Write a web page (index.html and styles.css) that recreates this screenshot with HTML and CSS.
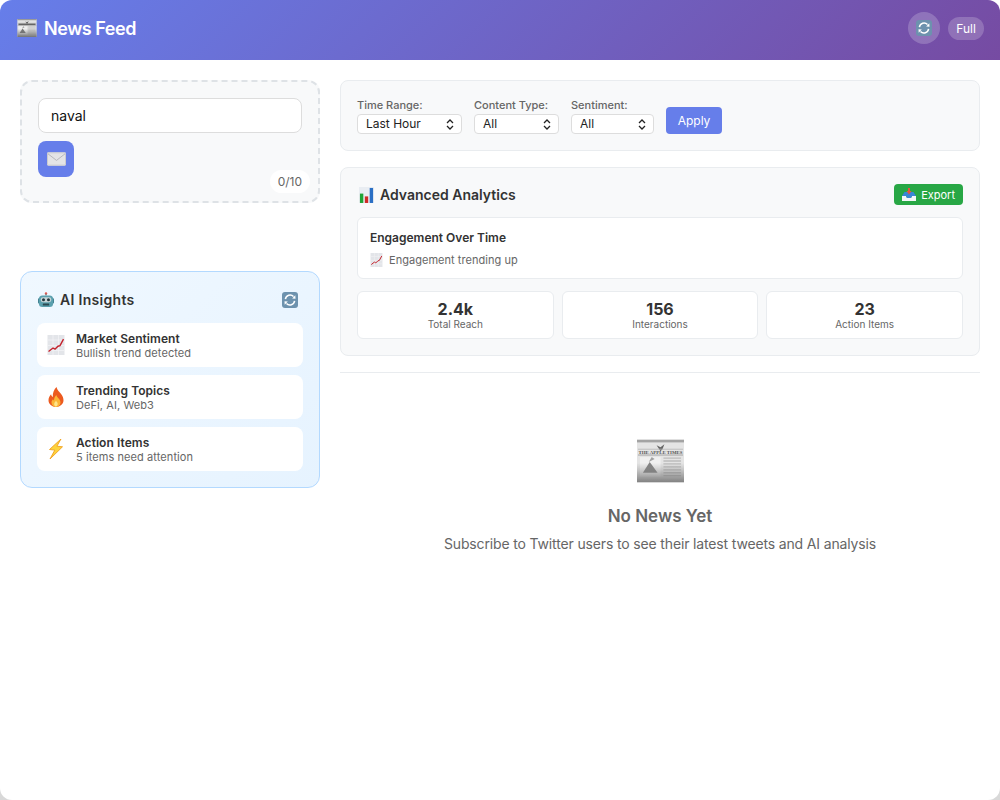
FILE: index.html
```html
<!DOCTYPE html>
<html lang="en">
<head>
    <meta charset="UTF-8">
    <meta name="viewport" content="width=device-width, initial-scale=1.0">
    <title>News Feed</title>
    <link rel="stylesheet" href="styles.css">
</head>
<body>
    <svg class="defs" width="0" height="0">
        <defs>
            <linearGradient id="news-fade" x1="0" y1="0" x2="0" y2="1">
                <stop offset="0" stop-color="#777" stop-opacity="0"/>
                <stop offset="1" stop-color="#666" stop-opacity=".9"/>
            </linearGradient>
        </defs>
        <symbol id="i-news" viewBox="0 0 48 44">
            <rect x="0" y="0" width="48" height="44" fill="#e2e2e2"/>
            <rect x="0" y="0" width="48" height="3" fill="#9a9a9a"/>
            <path d="M20 6l4 2 4-3-2 5-2 2-2-3z" fill="#555"/>
            <rect x="1" y="9.500" width="46" height=".8" fill="#aaa"/>
            <rect x="1" y="15.500" width="46" height=".8" fill="#888"/>
            <rect x="3" y="18" width="21" height="20" fill="#efefef"/>
            <path d="M6 34l7-11 3 4 5 7z" fill="#777"/>
            <path d="M12 23l3-5 3 2z" fill="#999"/>
            <path d="M27 19h18M27 22h18M27 25h18M27 28h18M27 31h18M27 34h18M27 37h18" stroke="#b5b5b5" stroke-width="1.300"/>
            <rect x="0" y="24" width="48" height="20" fill="url(#news-fade)"/>
        </symbol>
        <symbol id="i-mail" viewBox="0 0 20 14">
            <rect x="0" y="0" width="20" height="14" rx="1.500" fill="#e4e4e6"/>
            <rect x=".5" y=".5" width="19" height="13" rx="1" fill="none" stroke="#c9c9cd"/>
            <path d="M1 1.500l9 7 9-7" fill="none" stroke="#b5b5ba"/>
        </symbol>
        <symbol id="i-sync" viewBox="0 0 16 16">
            <rect width="16" height="16" rx="3" fill="#6d92ae"/>
            <path d="M3.400 7.200A4.700 4.700 0 0 1 11.500 4.600" fill="none" stroke="#fff" stroke-width="1.500"/>
            <path d="M12.600 8.800A4.700 4.700 0 0 1 4.500 11.400" fill="none" stroke="#fff" stroke-width="1.500"/>
            <path d="M10.200 6.600l3.300.2-.2-3.600zM5.800 9.400l-3.300-.2.2 3.600z" fill="#fff"/>
        </symbol>
        <symbol id="i-robot" viewBox="0 0 18 18">
            <circle cx="9" cy="1.600" r="1.400" fill="#e0574f"/>
            <rect x="8.400" y="2" width="1.200" height="2" fill="#777"/>
            <rect x="0" y="7" width="3" height="6" rx="1.200" fill="#3f7f8f"/>
            <rect x="15" y="7" width="3" height="6" rx="1.200" fill="#3f7f8f"/>
            <path d="M5 4h8a4 4 0 0 1 4 4v5a4 4 0 0 1-4 4H5a4 4 0 0 1-4-4V8a4 4 0 0 1 4-4z" fill="#5ba0ae"/>
            <rect x="3" y="6" width="12" height="5.400" rx="2.400" fill="#c5d3d6"/>
            <circle cx="6.200" cy="8.700" r="1.700" fill="#23383f"/>
            <circle cx="11.800" cy="8.700" r="1.700" fill="#23383f"/>
            <rect x="5.400" y="13" width="7.200" height="2.200" rx=".6" fill="#2c4a52"/>
        </symbol>
        <symbol id="i-up" viewBox="0 0 17 20">
            <rect width="17" height="20" fill="#e3e5e9"/>
            <path d="M0 10.500h17M0 5h17M0 15.500h17M5.500 0v20M11 0v20" stroke="#f2f3f5" stroke-width=".8"/>
            <path d="M1 16.500l4.500-3.500 2 1.200 3-3 2-.5 3.500-6.500" fill="none" stroke="#c4222c" stroke-width="1.400"/>
        </symbol>
        <symbol id="i-fire" viewBox="0 0 16 20">
            <path d="M8.500 0c.6 3.200 2.600 4.300 4.600 7 1.500 2 2.400 4 2.400 6.300C15.500 17.200 12 20 8 20s-7.500-2.800-7.500-6.700c0-2.600 1.100-4.500 2.600-6.100.2 1.400.8 2.200 1.700 2.800C4.500 6 6 2.500 8.500 0z" fill="#ec5a1f"/>
            <path d="M8.300 8c.4 1.900 1.900 2.600 3 4.200.9 1.300 1.200 2.300 1.200 3.300 0 2.600-2.100 4.500-4.500 4.500s-4.500-1.900-4.500-4.500c0-1.300.6-2.400 1.500-3.300.2.700.5 1.100 1 1.400C6 11.400 6.900 9.400 8.300 8z" fill="#fbb536"/>
            <path d="M8 13.500c.4 1 1.100 1.400 1.500 2.300.7 1.600-.3 3.700-1.500 3.700s-2.200-1.600-1.700-3.300c.3-1 1.300-1.500 1.700-2.700z" fill="#ffe58a"/>
        </symbol>
        <symbol id="i-bolt" viewBox="0 0 15 20">
            <path d="M12.500 0L1 10.500l5.300.6L1.500 20 14 7.800l-5.600-.6z" fill="#fdd33c" stroke="#f0a020" stroke-width=".9" stroke-linejoin="round"/>
        </symbol>
        <symbol id="i-bars" viewBox="0 0 16 17">
            <rect width="16" height="17" fill="#e9edf2"/>
            <rect x="1" y="7" width="3.600" height="10" fill="#1fa336"/>
            <rect x="6.200" y="10" width="3.600" height="7" fill="#cf2a27"/>
            <rect x="11.400" y="1" width="3.600" height="16" fill="#2a6fc4"/>
        </symbol>
        <symbol id="i-tray" viewBox="0 0 14 13">
            <path d="M0 8h4l1 2h4l1-2h4v5H0z" fill="#f4f6f8"/>
            <path d="M2.500 4h9L14 8h-4l-1 2H5L4 8H0z" fill="#3a86d6"/>
            <path d="M7 6.500L4.500 3H6V0h2v3h1.500z" fill="#e5533d"/>
        </symbol>
    </svg>

    <div class="app">
        <header class="top">
            <h1 class="brand">
                <svg class="brand-icon" viewBox="0 0 48 44">
                    <use href="#i-news" width="48" height="44"/>
                    <rect x="3" y="11" width="42" height="4" fill="#666"/>
                </svg>
                News Feed
            </h1>
            <div class="top-actions">
                <button class="round-btn"><svg class="sync"><use href="#i-sync"/></svg></button>
                <button class="pill-btn">Full</button>
            </div>
        </header>

        <main class="main">
            <aside class="side">
                <section class="subscribe">
                    <input class="sub-input" type="text" value="naval">
                    <button class="sub-btn"><svg class="mail"><use href="#i-mail"/></svg></button>
                    <span class="sub-count">0/10</span>
                </section>

                <section class="insights">
                    <div class="insights-head">
                        <h3 class="insights-title"><svg class="robot"><use href="#i-robot"/></svg>AI Insights</h3>
                        <svg class="sync"><use href="#i-sync"/></svg>
                    </div>
                    <div class="insight">
                        <svg class="insight-icon"><use href="#i-up"/></svg>
                        <div>
                            <div class="insight-name">Market Sentiment</div>
                            <div class="insight-text">Bullish trend detected</div>
                        </div>
                    </div>
                    <div class="insight">
                        <svg class="insight-icon"><use href="#i-fire"/></svg>
                        <div>
                            <div class="insight-name">Trending Topics</div>
                            <div class="insight-text">DeFi, AI, Web3</div>
                        </div>
                    </div>
                    <div class="insight">
                        <svg class="insight-icon"><use href="#i-bolt"/></svg>
                        <div>
                            <div class="insight-name">Action Items</div>
                            <div class="insight-text">5 items need attention</div>
                        </div>
                    </div>
                </section>
            </aside>

            <div class="content">
                <section class="filters">
                    <label class="filter filter-time">
                        <span class="filter-label">Time Range:</span>
                        <select class="filter-select"><option>Last Hour</option></select>
                    </label>
                    <label class="filter filter-type">
                        <span class="filter-label">Content Type:</span>
                        <select class="filter-select"><option>All</option></select>
                    </label>
                    <label class="filter filter-sent">
                        <span class="filter-label">Sentiment:</span>
                        <select class="filter-select"><option>All</option></select>
                    </label>
                    <button class="apply-btn">Apply</button>
                </section>

                <section class="analytics">
                    <div class="analytics-head">
                        <h3 class="analytics-title"><svg class="bars"><use href="#i-bars"/></svg>Advanced Analytics</h3>
                        <button class="export-btn"><svg class="tray"><use href="#i-tray"/></svg>Export</button>
                    </div>
                    <div class="chart-card">
                        <h4 class="chart-title">Engagement Over Time</h4>
                        <div class="chart-note"><svg class="note-icon"><use href="#i-up"/></svg>Engagement trending up</div>
                    </div>
                    <div class="stats">
                        <div class="stat"><div class="stat-num">2.4k</div><div class="stat-label">Total Reach</div></div>
                        <div class="stat"><div class="stat-num">156</div><div class="stat-label">Interactions</div></div>
                        <div class="stat"><div class="stat-num">23</div><div class="stat-label">Action Items</div></div>
                    </div>
                </section>

                <section class="empty">
                    <svg class="empty-icon" viewBox="0 0 48 44">
                        <use href="#i-news" width="48" height="44"/>
                        <text class="news-head" x="24" y="14.500" text-anchor="middle">THE APPLE TIMES</text>
                    </svg>
                    <h3 class="empty-title">No News Yet</h3>
                    <p class="empty-text">Subscribe to Twitter users to see their latest tweets and AI analysis</p>
                </section>
            </div>
        </main>
    </div>
</body>
</html>
```

FILE: styles.css
```css
*{
    margin: 0;
    padding: 0;
    box-sizing: border-box;
}
body{
    background: linear-gradient(white 60%, #d8d8d8);
    font-family: "Inter", "Liberation Sans", sans-serif;
    color: #333;
}
.defs{
    position: absolute;
}
button{
    border: none;
    font-family: inherit;
}
svg{
    display: block;
    flex: none;
}
.news-head{
    font-family: "Liberation Serif", serif;
    font-size: 5px;
    font-weight: 700;
    fill: #444;
}
.app{
    width: 1000px;
    height: 800px;
    background: white;
    border-radius: 12px;
    overflow: hidden;
}
.top{
    height: 60px;
    padding: 0 16px 4px 17px;
    display: flex;
    align-items: center;
    justify-content: space-between;
    background: linear-gradient(135deg, #667eea 0%, #764ba2 100%);
}
.brand{
    display: flex;
    align-items: center;
    gap: 7px;
    font-size: 18px;
    font-weight: 600;
    letter-spacing: -0.45px;
    color: white;
}
.brand-icon{
    width: 20px;
    height: 18px;
}
.top-actions{
    display: flex;
    align-items: center;
    gap: 8px;
}
.round-btn{
    width: 32px;
    height: 32px;
    border-radius: 50%;
    background: rgba(255,255,255,0.2);
    display: flex;
    align-items: center;
    justify-content: center;
}
.sync{
    width: 16px;
    height: 16px;
}
.pill-btn{
    width: 36px;
    height: 23px;
    border-radius: 12px;
    background: rgba(255,255,255,0.2);
    color: white;
    font-size: 12px;
    font-weight: 400;
}
.main{
    display: flex;
    gap: 20px;
    padding: 20px;
}
.side{
    width: 300px;
    flex: none;
}
.content{
    flex: 1;
}

/* subscribe box */
.subscribe{
    position: relative;
    height: 123px;
    padding: 16px;
    background: #f8f9fa;
    border: 2px dashed #dee2e6;
    border-radius: 12px;
}
.sub-input{
    display: block;
    width: 100%;
    height: 35px;
    padding: 0 12px;
    border: 1px solid #ddd;
    border-radius: 8px;
    background: white;
    font-family: inherit;
    font-size: 14px;
    color: #111;
    outline: none;
}
.sub-btn{
    margin-top: 8px;
    width: 36px;
    height: 36px;
    border-radius: 8px;
    background: #667eea;
    display: flex;
    align-items: center;
    justify-content: center;
}
.mail{
    width: 19px;
    height: 14px;
}
.sub-count{
    position: absolute;
    right: 8px;
    bottom: 8px;
    padding: 3px 8px;
    border-radius: 12px;
    background: white;
    font-size: 12px;
    line-height: 17px;
    color: #666;
}

/* ai insights */
.insights{
    margin-top: 68px;
    height: 217px;
    padding: 16px;
    background: linear-gradient(135deg, #f0f8ff 0%, #e6f3ff 100%);
    border: 1px solid #b3d9ff;
    border-radius: 12px;
}
.insights-head{
    display: flex;
    align-items: center;
    justify-content: space-between;
    height: 24px;
    margin-bottom: 11px;
    padding: 0 5px 0 1px;
}
.insights-title{
    display: flex;
    align-items: center;
    gap: 6px;
    padding-bottom: 1px;
    font-size: 14px;
    font-weight: 600;
    letter-spacing: 0.3px;
    line-height: 17px;
    color: #333;
}
.robot{
    width: 16px;
    height: 16px;
}
.insight{
    display: flex;
    align-items: center;
    gap: 11px;
    height: 44px;
    margin-bottom: 8px;
    padding: 0 10px;
    background: white;
    border-radius: 8px;
}
.insight-icon{
    width: 18px;
    height: 20px;
}
.insight-name{
    font-size: 12px;
    font-weight: 600;
    line-height: 15px;
    letter-spacing: 0.05px;
    color: #333;
}
.insight-text{
    font-size: 11px;
    line-height: 14px;
    letter-spacing: 0.08px;
    color: #666;
}

/* filter bar */
.filters{
    display: flex;
    align-items: flex-end;
    gap: 12px;
    height: 71px;
    padding: 16px;
    background: #f8f9fa;
    border: 1px solid #e9ecef;
    border-radius: 8px;
}
.filter{
    display: flex;
    flex-direction: column;
    gap: 2px;
}
.filter-label{
    font-size: 11px;
    line-height: 13px;
    font-weight: 500;
    color: #666;
}
.filter-select{
    display: block;
    height: 20px;
    padding: 0 8px 2px;
    border: 1px solid #ddd;
    border-radius: 4px;
    background: white url("data:image/svg+xml,%3Csvg xmlns='http://www.w3.org/2000/svg' width='8' height='11'%3E%3Cpath d='M1 4l3-3 3 3M1 7l3 3 3-3' fill='none' stroke='%23222' stroke-width='1.300'/%3E%3C/svg%3E") no-repeat right 7px center;
    appearance: none;
    font-family: inherit;
    font-size: 12px;
    color: #222;
}
.filter-time .filter-select{
    width: 105px;
}
.filter-type .filter-select{
    width: 85px;
}
.filter-sent .filter-select{
    width: 83px;
}
.apply-btn{
    width: 56px;
    height: 27px;
    border-radius: 4px;
    background: #667eea;
    color: white;
    font-size: 12px;
    font-weight: 400;
}

/* analytics */
.analytics{
    margin-top: 16px;
    height: 189px;
    padding: 16px;
    background: #f8f9fa;
    border: 1px solid #e9ecef;
    border-radius: 8px;
}
.analytics-head{
    display: flex;
    align-items: center;
    justify-content: space-between;
    height: 21px;
    margin-bottom: 12px;
}
.analytics-title{
    display: flex;
    align-items: center;
    gap: 6px;
    padding-left: 2px;
    font-size: 14px;
    font-weight: 600;
    color: #333;
}
.bars{
    width: 15px;
    height: 16px;
}
.export-btn{
    display: flex;
    align-items: center;
    gap: 5px;
    height: 21px;
    padding: 0 8px;
    border-radius: 4px;
    background: #28a745;
    color: white;
    font-size: 11px;
    font-weight: 400;
}
.tray{
    width: 14px;
    height: 13px;
}
.chart-card{
    height: 62px;
    padding: 12px;
    background: white;
    border: 1px solid #e9ecef;
    border-radius: 6px;
}
.chart-title{
    font-size: 12px;
    line-height: 15px;
    font-weight: 600;
    color: #333;
}
.chart-note{
    display: flex;
    align-items: center;
    gap: 6px;
    margin-top: 8px;
    font-size: 11px;
    line-height: 14px;
    letter-spacing: 0.04px;
    color: #666;
}
.note-icon{
    width: 13px;
    height: 14px;
}
.stats{
    display: grid;
    grid-template-columns: repeat(3, 1fr);
    gap: 8px;
    margin-top: 12px;
}
.stat{
    height: 48px;
    padding-top: 8px;
    text-align: center;
    background: white;
    border: 1px solid #e9ecef;
    border-radius: 6px;
}
.stat-num{
    font-size: 16px;
    line-height: 18px;
    font-weight: 700;
    color: #333;
}
.stat-label{
    font-size: 10px;
    line-height: 12px;
    color: #666;
}

/* empty state */
.empty{
    margin-top: 16px;
    padding-top: 66px;
    border-top: 1px solid #e9ecef;
    text-align: center;
}
.empty-icon{
    width: 47px;
    height: 44px;
    margin: 0 auto;
    opacity: 0.9;
}
.empty-title{
    margin-top: 22px;
    font-size: 17px;
    line-height: 22px;
    font-weight: 600;
    color: #666;
}
.empty-text{
    margin-top: 7px;
    font-size: 14px;
    line-height: 20px;
    letter-spacing: -0.15px;
    color: #666;
}
```
